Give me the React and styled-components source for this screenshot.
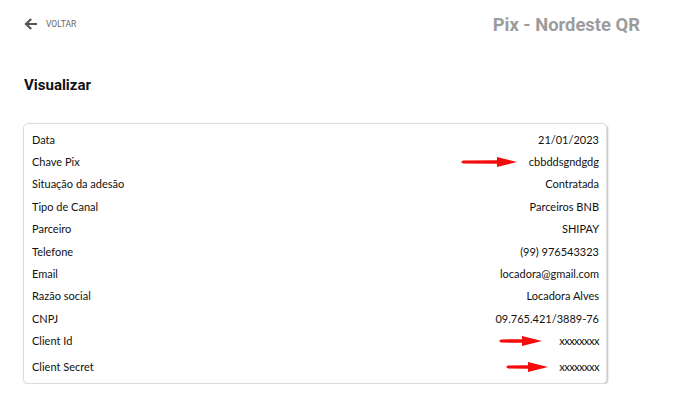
import styled, { createGlobalStyle } from "styled-components";

const GlobalStyle = createGlobalStyle`
  body {
    margin: 0;
    background: #fff;
    font-family: Lato, "Open Sans", sans-serif;
  }
`;

export default function App() {
  const rows = [
    { label: "Data", value: "21/01/2023" },
    { label: "Chave Pix", value: "cbbddsgndgdg", arrow: { gap: 12, len: 56 } },
    { label: "Situação da adesão", value: "Contratada" },
    { label: "Tipo de Canal", value: "Parceiros BNB" },
    { label: "Parceiro", value: "SHIPAY" },
    { label: "Telefone", value: "(99) 976543323" },
    { label: "Email", value: "locadora@gmail.com" },
    { label: "Razão social", value: "Locadora Alves" },
    { label: "CNPJ", value: "09.765.421/3889-76" },
    { label: "Client Id", value: "xxxxxxxx", arrow: { gap: 17, len: 43 }, small: true },
    { label: "Client Secret", value: "xxxxxxxx", arrow: { gap: 11, len: 42 }, small: true, tall: true },
  ];
  return (
    <Page>
      <GlobalStyle />
      <Header>
        <Back>
          <svg width="14" height="14" viewBox="0 0 14 14">
            <path
              d="M13 7H2.5M7.2 2L2 7l5.2 5"
              fill="none"
              stroke="#555"
              strokeWidth="2.2"
              strokeLinejoin="miter"
            />
          </svg>
          <span>VOLTAR</span>
        </Back>
        <Title>Pix - Nordeste QR</Title>
      </Header>
      <Heading>Visualizar</Heading>
      <Card>
        {rows.map((row) => (
          <Row key={row.label} $tall={row.tall}>
            <Label>{row.label}</Label>
            <Value $small={row.small}>
              {row.arrow && (
                <Arrow
                  $gap={row.arrow.gap}
                  width={row.arrow.len}
                  height="12"
                  viewBox={`0 0 ${row.arrow.len} 12`}
                >
                  <path
                    d={`M0 6 L2 4.4 L${row.arrow.len - 20} 4.2 L${row.arrow.len - 20} 1 L${row.arrow.len} 6 L${row.arrow.len - 20} 11 L${row.arrow.len - 20} 7.8 L2 7.6 Z`}
                    fill="#f40b0b"
                  />
                </Arrow>
              )}
              {row.value}
            </Value>
          </Row>
        ))}
      </Card>
    </Page>
  );
}

const Page = styled.div`
  padding: 16px 36px 0 24px;
`;

const Header = styled.div`
  display: flex;
  align-items: center;
  justify-content: space-between;
  height: 16px;
`;

const Back = styled.div`
  display: flex;
  align-items: center;
  gap: 8px;
  span {
    font-family: Roboto, sans-serif;
    font-size: 8.5px;
    color: #666;
  }
`;

const Title = styled.h1`
  margin: 0;
  font-family: Roboto, sans-serif;
  font-size: 18.4px;
  font-weight: 700;
  color: #9c9c9c;
`;

const Heading = styled.h2`
  margin: 44px 0 0;
  font-family: Roboto, sans-serif;
  font-size: 15px;
  font-weight: 700;
  color: #111;
  line-height: 18px;
`;

const Card = styled.div`
  margin: 29px 0 0 -1px;
  width: 584px;
  box-sizing: border-box;
  border: 1px solid #dcdcdc;
  border-radius: 5px;
  box-shadow: 1px 1px 2px rgba(0, 0, 0, 0.25);
  padding: 4px 7px 4px 8px;
  font-size: 11px;
  color: #111;
`;

const Row = styled.div`
  display: flex;
  align-items: center;
  justify-content: space-between;
  height: ${(p) => (p.$tall ? "24px" : "22.4px")};
  padding-top: ${(p) => (p.$tall ? "3px" : "0")};
`;

const Label = styled.span``;

const Value = styled.span`
  position: relative;
  letter-spacing: ${(p) => (p.$small ? "-0.5px" : "0")};
`;

const Arrow = styled.svg`
  position: absolute;
  top: 50%;
  right: calc(100% + ${(p) => p.$gap}px);
  transform: translateY(-50%);
`;
